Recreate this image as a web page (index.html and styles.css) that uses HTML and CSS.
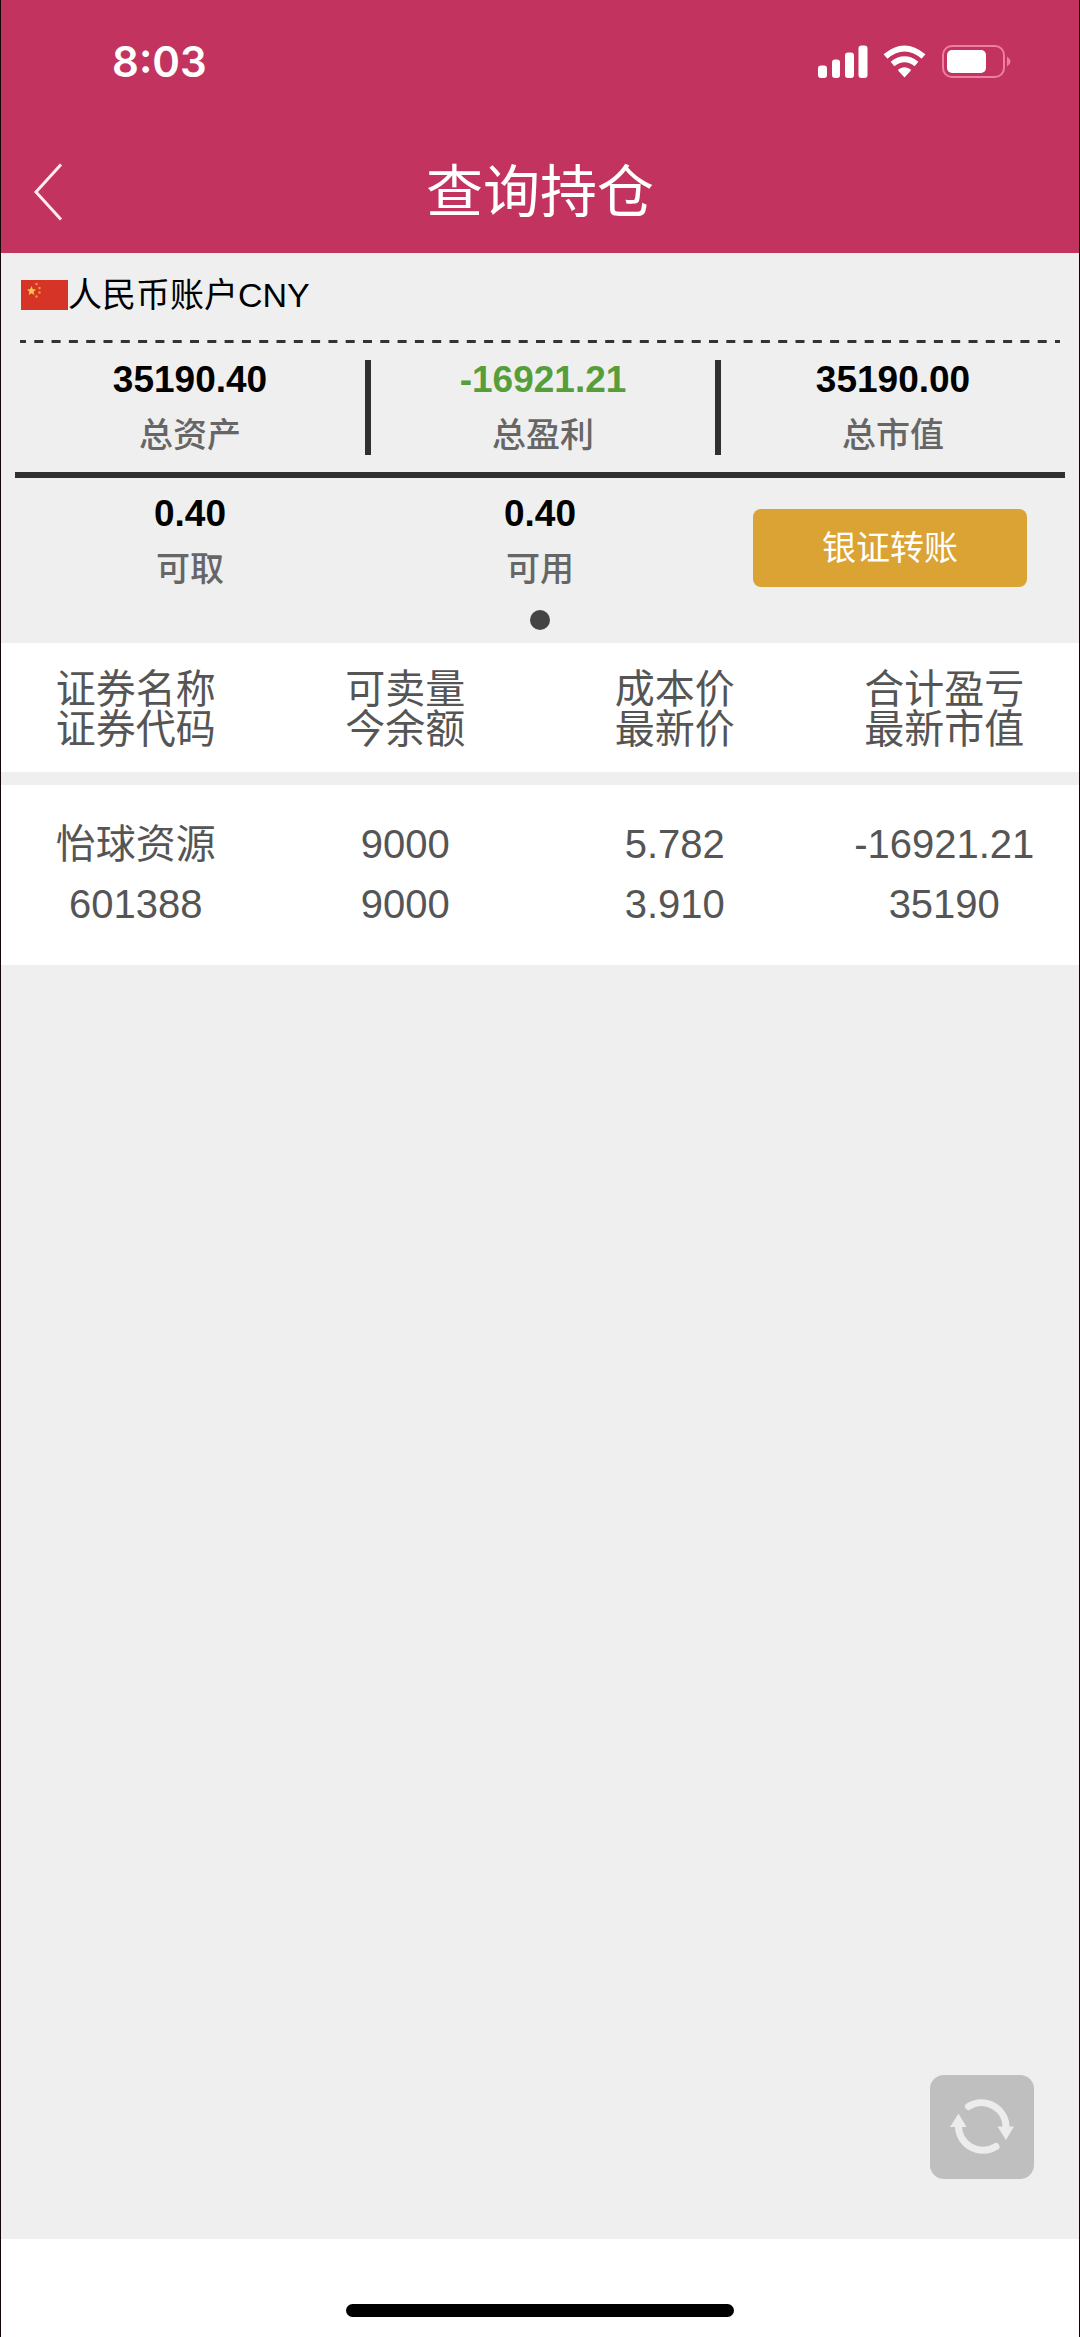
FILE: index.html
```html
<!DOCTYPE html>
<html lang="zh-CN">
<head>
<meta charset="utf-8">
<meta name="viewport" content="width=device-width, initial-scale=1">
<title>查询持仓</title>
<link rel="stylesheet" href="styles.css">
</head>
<body>
<header class="top">
  <div class="status">
    <span class="clock">8:03</span>
    <svg class="status-icons" width="194" height="34" viewBox="0 0 194 34" role="img" aria-label="信号、无线网络、电量">
      <g fill="#fff">
        <rect x="1" y="20.500" width="9" height="12.500" rx="3"/>
        <rect x="15" y="14.500" width="8" height="18.500" rx="3"/>
        <rect x="28" y="7.500" width="9" height="25.500" rx="3"/>
        <rect x="41.500" y="0.500" width="9" height="32.500" rx="3"/>
        <path d="M87.500 32.500 L81.500 26 Q80.500 24.500 82 24 Q87.500 20.500 93 24 Q94.500 24.500 93.500 26Z"/>
      </g>
      <g fill="none" stroke="#fff" stroke-width="6">
        <path d="M68.500 11.500 Q87.500 -4.500 106.500 11.500"/>
        <path d="M75.500 19 Q87.500 9.500 99.500 19"/>
      </g>
      <rect x="126" y="1" width="61" height="31" rx="9" fill="none" stroke="#ec7fa2" stroke-width="2"/>
      <rect x="130" y="5" width="39" height="23" rx="5" fill="#fff"/>
      <path d="M190 11.500 Q197 16.500 190 21.500Z" fill="#ec7fa2"/>
    </svg>
  </div>
  <nav class="nav">
    <button class="back" type="button" aria-label="返回">
      <svg width="30" height="58" viewBox="0 0 30 58"><path d="M28 1.500 L3 29 L28 56.500" fill="none" stroke="#ffeaf2" stroke-width="3"/></svg>
    </button>
    <h1 class="title">查询持仓</h1>
  </nav>
</header>

<main class="content">
  <section class="account">
    <div class="account-name">
      <svg class="flag" width="47" height="30" viewBox="0 0 47 30" aria-hidden="true">
        <rect width="47" height="30" fill="#d63426"/>
        <path d="M10.500 6 L11.800 9.300 L15 9.500 L12.500 11.700 L13.400 15 L10.500 13.200 L7.600 15 L8.500 11.700 L6 9.500 L9.200 9.300Z" fill="#f8c84a"/>
        <g fill="#ee9a3c"><circle cx="15.500" cy="4" r="1.200"/><circle cx="18.500" cy="8" r="1.200"/><circle cx="18.500" cy="12.500" r="1.200"/><circle cx="15.500" cy="16.500" r="1.200"/></g>
      </svg>
      <span>人民币账户CNY</span>
    </div>
    <svg class="dashes" viewBox="0 0 1040 3" preserveAspectRatio="none" aria-hidden="true">
      <path d="M0 1.500 H1040" stroke="#333" stroke-width="3" stroke-dasharray="9 8.300" stroke-dashoffset="3"/>
    </svg>
    <div class="stats totals">
      <div class="stat"><strong class="value">35190.40</strong><span class="label">总资产</span></div>
      <div class="stat"><strong class="value loss">-16921.21</strong><span class="label">总盈利</span></div>
      <div class="stat"><strong class="value">35190.00</strong><span class="label">总市值</span></div>
    </div>
    <div class="stats cash">
      <div class="stat"><strong class="value">0.40</strong><span class="label">可取</span></div>
      <div class="stat"><strong class="value">0.40</strong><span class="label">可用</span></div>
      <div class="stat"><button class="transfer" type="button">银证转账</button></div>
    </div>
    <div class="dot"></div>
  </section>

  <table class="holdings">
    <thead>
      <tr>
        <th scope="col">证券名称<br>证券代码</th>
        <th scope="col">可卖量<br>今余额</th>
        <th scope="col">成本价<br>最新价</th>
        <th scope="col">合计盈亏<br>最新市值</th>
      </tr>
    </thead>
    <tbody>
      <tr>
        <td>怡球资源<br>601388</td>
        <td>9000<br>9000</td>
        <td>5.782<br>3.910</td>
        <td>-16921.21<br>35190</td>
      </tr>
    </tbody>
  </table>

  <button class="refresh" type="button" aria-label="刷新">
    <svg width="104" height="104" viewBox="0 0 104 104">
      <g fill="none" stroke="#ececec" stroke-width="7" stroke-linecap="round">
        <path d="M38.500 31.500 A24.500 24.500 0 0 1 76 53"/>
        <path d="M28.500 49 A24.500 24.500 0 0 0 66 71.500"/>
      </g>
      <path d="M67.500 51.500 H84 L76 65Z M20 52 L28.500 38.500 L36.500 52Z" fill="#ececec"/>
    </svg>
  </button>
</main>

<footer class="home"><div class="home-bar"></div></footer>
</body>
</html>
```
FILE: styles.css
```css
* {
  box-sizing: border-box;
}

body {
  margin: 0;
  min-height: 100vh;
  display: flex;
  flex-direction: column;
  border: solid #15060b;
  border-width: 0 1px;
  background: #fff;
  color: #000;
  font-family: "Liberation Sans", "Noto Sans CJK SC", sans-serif;
}

button {
  padding: 0;
  border: 0;
  font: inherit;
}

svg {
  display: block;
}

.top {
  background: #c3335f;
  color: #fff;
}

.status {
  display: flex;
  justify-content: space-between;
  align-items: center;
  height: 124px;
  padding: 0 68px 0 111px;
}

.clock {
  font: 600 42px/50px Inter, sans-serif;
}

.nav {
  display: grid;
  grid-template-columns: 100px 1fr 100px;
  align-items: center;
  height: 129px;
  padding-top: 6px;
}

.back {
  height: 100px;
  padding-left: 32px;
  background: none;
}

.title {
  margin: 0;
  font-size: 57px;
  font-weight: 400;
  line-height: 80px;
  text-align: center;
}

.content {
  flex: 1;
  display: flex;
  flex-direction: column;
  background: #efefef;
}

.account {
  height: 390px;
  padding: 0 14px;
}

.account-name {
  display: flex;
  align-items: center;
  height: 87px;
  padding: 0 6px 4px;
  font-size: 34px;
  line-height: 40px;
}

.dashes {
  width: calc(100% - 10px);
  height: 3px;
  margin: 0 5px;
}

.stats {
  display: grid;
  grid-template-columns: repeat(3, 1fr);
}

.totals {
  height: 135px;
  padding: 17px 0;
  border-bottom: 6px solid #303032;
}

.stat {
  display: flex;
  flex-direction: column;
  align-items: center;
}

.totals .stat + .stat {
  border-left: 6px solid #303032;
}

.value {
  font-size: 37px;
  line-height: 40px;
}

.label {
  padding-top: 15px;
  color: #666;
  font-size: 34px;
  font-weight: 500;
  line-height: 40px;
}

.loss {
  color: #569e3a;
}

.cash {
  height: 132px;
  padding-top: 16px;
}

.transfer {
  width: 274px;
  height: 78px;
  margin-top: 15px;
  padding-bottom: 6px;
  border-radius: 8px;
  background: #daa334;
  color: #fff;
  font-size: 34px;
}

.dot {
  width: 20px;
  height: 20px;
  margin: 0 auto;
  border-radius: 50%;
  background: #444;
}

.holdings {
  width: 100%;
  table-layout: fixed;
  border-collapse: collapse;
  background: #fff;
  color: #555;
  font-size: 40px;
  text-align: center;
}

.holdings th {
  padding: 26px 0 23px;
  font-weight: 400;
  line-height: 40px;
}

.holdings td {
  padding: 29px 0 31px;
  line-height: 60px;
}

.holdings thead {
  border-bottom: 13px solid #efefef;
}

.refresh {
  align-self: flex-end;
  width: 104px;
  height: 104px;
  margin: auto 45px 60px 0;
  border-radius: 14px;
  background: #bfbfbf;
}

.home {
  display: flex;
  justify-content: center;
  align-items: flex-end;
  height: 98px;
  padding-bottom: 20px;
}

.home-bar {
  width: 36%;
  height: 13px;
  border-radius: 7px;
  background: #000;
}
```
